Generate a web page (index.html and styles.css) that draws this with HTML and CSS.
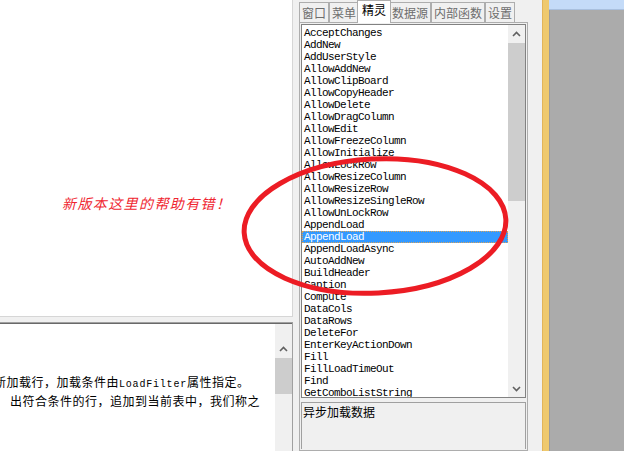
FILE: index.html
```html
<!DOCTYPE html>
<html lang="zh-CN">
<head>
<meta charset="utf-8">
<title>精灵</title>
<link rel="stylesheet" href="styles.css">
</head>
<body>
<div class="app">
  <section class="left">
    <div class="canvas">
      <p class="note">新版本这里的帮助有错！</p>
    </div>
    <div class="help">
      <div class="help-text">
        <p class="line first">新加载行，加载条件由<span class="lat">LoadFilter</span>属性指定。</p>
        <p class="line second">出符合条件的行，追加到当前表中，我们称之</p>
      </div>
      <div class="vscroll help-scroll">
        <span class="arrow-btn"><svg width="9" height="6" viewBox="0 0 9 6"><polyline points="1,5 4.5,1.5 8,5" fill="none" stroke="#606060" stroke-width="1.6"/></svg></span>
        <span class="thumb help-thumb"></span>
      </div>
    </div>
  </section>

  <section class="props">
    <nav class="tabs">
      <span class="tab">窗口</span>
      <span class="tab">菜单</span>
      <span class="tab active">精灵</span>
      <span class="tab">数据源</span>
      <span class="tab">内部函数</span>
      <span class="tab">设置</span>
    </nav>
    <div class="page">
      <div class="listbox">
        <ul class="items">
          <li>AcceptChanges</li>
          <li>AddNew</li>
          <li>AddUserStyle</li>
          <li>AllowAddNew</li>
          <li>AllowClipBoard</li>
          <li>AllowCopyHeader</li>
          <li>AllowDelete</li>
          <li>AllowDragColumn</li>
          <li>AllowEdit</li>
          <li>AllowFreezeColumn</li>
          <li>AllowInitialize</li>
          <li>AllowLockRow</li>
          <li>AllowResizeColumn</li>
          <li>AllowResizeRow</li>
          <li>AllowResizeSingleRow</li>
          <li>AllowUnLockRow</li>
          <li>AppendLoad</li>
          <li class="selected">AppendLoad</li>
          <li>AppendLoadAsync</li>
          <li>AutoAddNew</li>
          <li>BuildHeader</li>
          <li>Caption</li>
          <li>Compute</li>
          <li>DataCols</li>
          <li>DataRows</li>
          <li>DeleteFor</li>
          <li>EnterKeyActionDown</li>
          <li>Fill</li>
          <li>FillLoadTimeOut</li>
          <li>Find</li>
          <li>GetComboListString</li>
        </ul>
        <div class="vscroll list-scroll">
          <span class="arrow-btn"><svg width="9" height="6" viewBox="0 0 9 6"><polyline points="1,5 4.5,1.5 8,5" fill="none" stroke="#606060" stroke-width="1.6"/></svg></span>
          <span class="thumb list-thumb"></span>
          <span class="track-rest"></span>
          <span class="arrow-btn"><svg width="9" height="6" viewBox="0 0 9 6"><polyline points="1,1 4.5,4.5 8,1" fill="none" stroke="#606060" stroke-width="1.6"/></svg></span>
        </div>
      </div>
      <div class="desc">异步加载数据</div>
    </div>
  </section>

  <div class="rail"></div>
  <div class="desktop"><div class="titlebar"></div></div>

  <svg class="ink" width="624" height="451" viewBox="0 0 624 451">
    <ellipse cx="375" cy="226" rx="131" ry="67" transform="rotate(-3 375 226)" fill="none" stroke="#ec1c24" stroke-width="5"/>
  </svg>
</div>
</body>
</html>
```

FILE: styles.css
```css
html, body {
  margin: 0;
  padding: 0;
}

body {
  width: 624px;
  height: 451px;
  overflow: hidden;
  background: #f0f0f0;
  font-family: "Noto Sans CJK SC", "Noto Sans", sans-serif;
}

.app {
  position: relative;
  display: flex;
  height: 451px;
}

/* ---------- left side ---------- */
.left {
  width: 293px;
  display: flex;
  flex-direction: column;
}

.canvas {
  box-sizing: border-box;
  height: 317px;
  background: #fff;
  border-right: 1px solid #d6d6d6;
  border-bottom: 1px solid #d6d6d6;
  padding: 194px 0 0 62px;
}

.note {
  margin: 0;
  font-size: 14px;
  line-height: 18px;
  font-style: italic;
  letter-spacing: 1.4px;
  color: #ef2630;
}

.help {
  flex: 1;
  margin-top: 5px;
  display: flex;
  background: #fff;
  border-top: 1px solid #a0a0a0;
  box-shadow: inset 0 1px 0 #696969;
  border-right: 1px solid #a0a0a0;
  min-height: 0;
}

.help-text {
  flex: 1;
  overflow: hidden;
  padding-top: 51px;
  font-size: 12px;
  line-height: 16px;
  letter-spacing: 0.5px;
  color: #000;
  white-space: nowrap;
}

.line {
  margin: 0;
}

.line.first {
  margin-left: -6px;
}

.line.second {
  margin-left: 10px;
}

.lat {
  font-family: "Liberation Mono", monospace;
  font-size: 10px;
  letter-spacing: 0.8px;
}

.vscroll {
  width: 17px;
  background: #f0f0f0;
  display: flex;
  flex-direction: column;
  align-items: stretch;
}

.arrow-btn {
  height: 17px;
  display: flex;
  align-items: center;
  justify-content: center;
}

.thumb {
  background: #cdcdcd;
}

.help-scroll {
  margin-top: 1px;
  padding-top: 16px;
}

.help-thumb {
  height: 36px;
  margin-top: 1px;
}

/* ---------- property panel ---------- */
.props {
  width: 249px;
  padding-left: 6px;
  box-sizing: border-box;
  display: flex;
  flex-direction: column;
}

.tabs {
  display: flex;
  align-items: flex-end;
  height: 22px;
}

.tab {
  box-sizing: border-box;
  height: 20px;
  padding: 0 2px;
  border: 1px solid #adadad;
  border-bottom: none;
  background: #f0f0f0;
  color: #6d6d6d;
  font-size: 12px;
  line-height: 19px;
}

.tab.active {
  position: relative;
  z-index: 1;
  height: 23px;
  margin: 0 -2px -1px;
  padding: 0 4px;
  background: #fff;
  color: #000;
  line-height: 18px;
}

.page {
  box-sizing: border-box;
  width: 229px;
  flex: 1;
  border: 1px solid #adadad;
  padding: 1px;
  display: flex;
  flex-direction: column;
  min-height: 0;
}

.listbox {
  box-sizing: border-box;
  height: 374px;
  border: 1px solid #828282;
  background: #fff;
  display: flex;
}

.items {
  flex: 1;
  margin: 0;
  padding: 2px 0 0;
  list-style: none;
  overflow: hidden;
  font-family: "Liberation Mono", monospace;
  font-size: 11px;
  letter-spacing: -0.6px;
  line-height: 12px;
  color: #000;
}

.items li {
  height: 12px;
  padding-left: 2px;
  white-space: nowrap;
}

.items li.selected {
  background: #3399ff;
  color: #fff;
  outline: 1px dotted #d9a35a;
  outline-offset: -1px;
}

.list-scroll {
  width: 17px;
}

.list-thumb {
  height: 158px;
  margin-top: 1px;
}

.track-rest {
  flex: 1;
}

.desc {
  flex: 1;
  margin-top: 4px;
  border: 1px solid #a0a0a0;
  border-bottom: none;
  padding: 1px 0 0 1px;
  font-size: 12px;
  line-height: 16px;
  color: #000;
}

/* ---------- right edge ---------- */
.rail {
  width: 7px;
  background: #efc96e;
  box-shadow: inset 1px 0 0 #e2b45a;
}

.desktop {
  flex: 1;
  background: #ababab;
  box-shadow: inset 1px 0 0 #9c9c9c;
}

.titlebar {
  height: 9px;
  background: #c4dbf8;
  border-bottom: 1px solid #a9c0de;
}

.ink {
  position: absolute;
  left: 0;
  top: 0;
  pointer-events: none;
}
```
